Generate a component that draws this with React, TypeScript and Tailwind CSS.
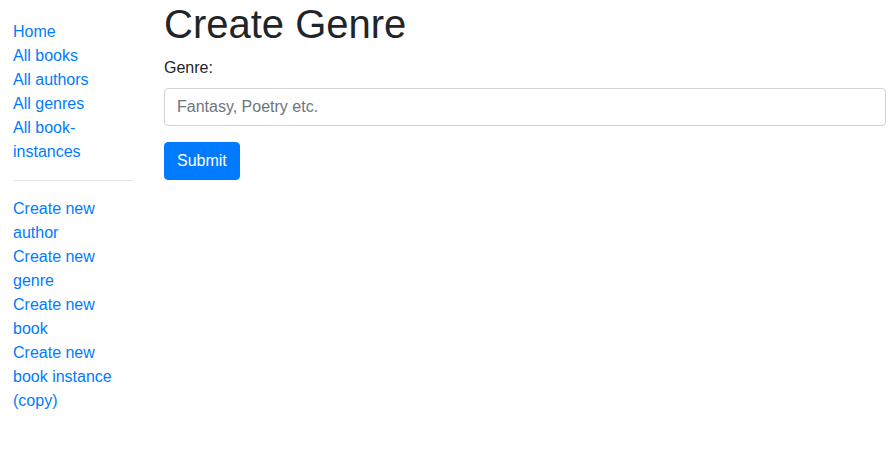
import React from "react";

const font = { fontFamily: '"Liberation Sans", Arial, sans-serif' };

export default function App() {
  const top = ["Home", "All books", "All authors", "All genres", "All book-instances"];
  const bottom = ["Create new author", "Create new genre", "Create new book", "Create new book instance (copy)"];
  return (
    <div className="flex w-[896px] min-h-[451px] bg-white text-[16px] leading-[24px] text-[#212529]" style={font}>
      <div className="w-[149px] shrink-0 pl-[13px] pr-[15px]">
        <ul className="mt-[20px] list-none p-0">
          {top.map((t) => (
            <li key={t} className="pr-[6px]">
              <a className="text-[#007bff] no-underline cursor-pointer">{t}</a>
            </li>
          ))}
          <hr className="my-[16px] border-0 border-t border-t-[rgba(0,0,0,0.1)]" />
          {bottom.map((t) => (
            <li key={t} className="pr-[6px]">
              <a className="text-[#007bff] no-underline cursor-pointer">{t}</a>
            </li>
          ))}
        </ul>
      </div>
      <div className="flex-1 pl-[15px] pr-[10px]">
        <h1 className="m-0 mb-[8px] text-[40px] leading-[48px] font-medium">Create Genre</h1>
        <form>
          <div className="mb-[16px]">
            <label className="inline-block mb-[8px]">Genre:</label>
            <input
              className="block w-full h-[38px] px-[12px] py-[6px] text-[16px] leading-[24px] text-[#495057] bg-white border border-[#ced4da] rounded-[4px] placeholder:text-[#6c757d] outline-none"
              placeholder="Fantasy, Poetry etc."
              style={font}
            />
          </div>
          <button
            type="button"
            className="h-[38px] px-[12px] py-[6px] text-[16px] leading-[24px] text-white bg-[#007bff] border border-[#007bff] rounded-[4px]"
            style={font}
          >
            Submit
          </button>
        </form>
      </div>
    </div>
  );
}
